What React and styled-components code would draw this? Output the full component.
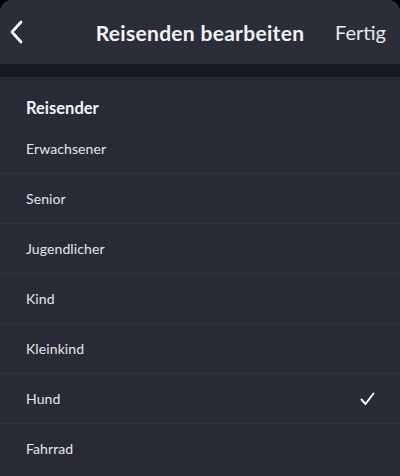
import styled, { createGlobalStyle } from "styled-components";

const GlobalStyle = createGlobalStyle`
  html, body {
    margin: 0;
    padding: 0;
    background: #000;
  }
  body {
    font-family: Lato, "Noto Sans", sans-serif;
    -webkit-font-smoothing: antialiased;
  }
`;

const Sheet = styled.div`
  width: 400px;
  height: 476px;
  background: #282b35;
  border-radius: 12px 12px 0 0;
  overflow: hidden;
  color: #eceef2;
`;

const Header = styled.header`
  height: 64px;
  background: #2b2e38;
  display: grid;
  grid-template-columns: 60px 1fr 60px;
  align-items: center;
`;

const BackButton = styled.button`
  background: none;
  border: 0;
  padding: 0 0 0 8px;
  display: flex;
  align-items: center;
  color: #fff;
  height: 100%;
`;

const Title = styled.h1`
  margin: 0;
  text-align: center;
  font-size: 21px;
  font-weight: 700;
  color: #f2f3f5;
  letter-spacing: 0.3px;
`;

const Done = styled.button`
  background: none;
  border: 0;
  padding: 0 14px 0 0;
  font-family: inherit;
  font-size: 20px;
  color: #e8e9ec;
  text-align: right;
  white-space: nowrap;
  justify-self: end;
`;

const Divider = styled.div`
  height: 13px;
  background: #161923;
`;

const SectionTitle = styled.h2`
  margin: 0;
  padding: 21px 26px 0;
  font-size: 16.5px;
  font-weight: 700;
  color: #f3f4f6;
  height: 30px;
`;

const List = styled.ul`
  list-style: none;
  margin: 0;
  padding: 0;
`;

const Row = styled.li`
  height: 50px;
  box-sizing: border-box;
  padding: 0 26px 0 26px;
  display: flex;
  align-items: center;
  justify-content: space-between;
  font-size: 14px;
  letter-spacing: 0.1px;
  color: #e4e6ea;
  border-top: ${(p) => (p.$first ? "none" : "1px solid #30343f")};
  margin-top: ${(p) => (p.$first ? "-5px" : "0")};
`;

const Check = styled.svg`
  width: 15px;
  height: 14px;
  margin-right: -1px;
`;

const travellers = [
  "Erwachsener",
  "Senior",
  "Jugendlicher",
  "Kind",
  "Kleinkind",
  "Hund",
  "Fahrrad",
];

export default function App() {
  return (
    <>
      <GlobalStyle />
      <Sheet>
        <Header>
          <BackButton aria-label="Zurück">
            <svg width="18" height="26" viewBox="0 0 18 26" fill="none">
              <path
                d="M13 3 L4 13 L13 23"
                stroke="#fff"
                strokeWidth="2.8"
                strokeLinecap="round"
                strokeLinejoin="round"
              />
            </svg>
          </BackButton>
          <Title>Reisenden bearbeiten</Title>
          <Done>Fertig</Done>
        </Header>
        <Divider />
        <SectionTitle>Reisender</SectionTitle>
        <List>
          {travellers.map((t, i) => (
            <Row key={t} $first={i === 0}>
              {t}
              {t === "Hund" && (
                <Check viewBox="0 0 15 14" fill="none">
                  <path
                    d="M1.5 7.5 L5.5 12 L13.5 1.5"
                    stroke="#fff"
                    strokeWidth="2"
                    strokeLinecap="round"
                    strokeLinejoin="round"
                  />
                </Check>
              )}
            </Row>
          ))}
        </List>
      </Sheet>
    </>
  );
}
